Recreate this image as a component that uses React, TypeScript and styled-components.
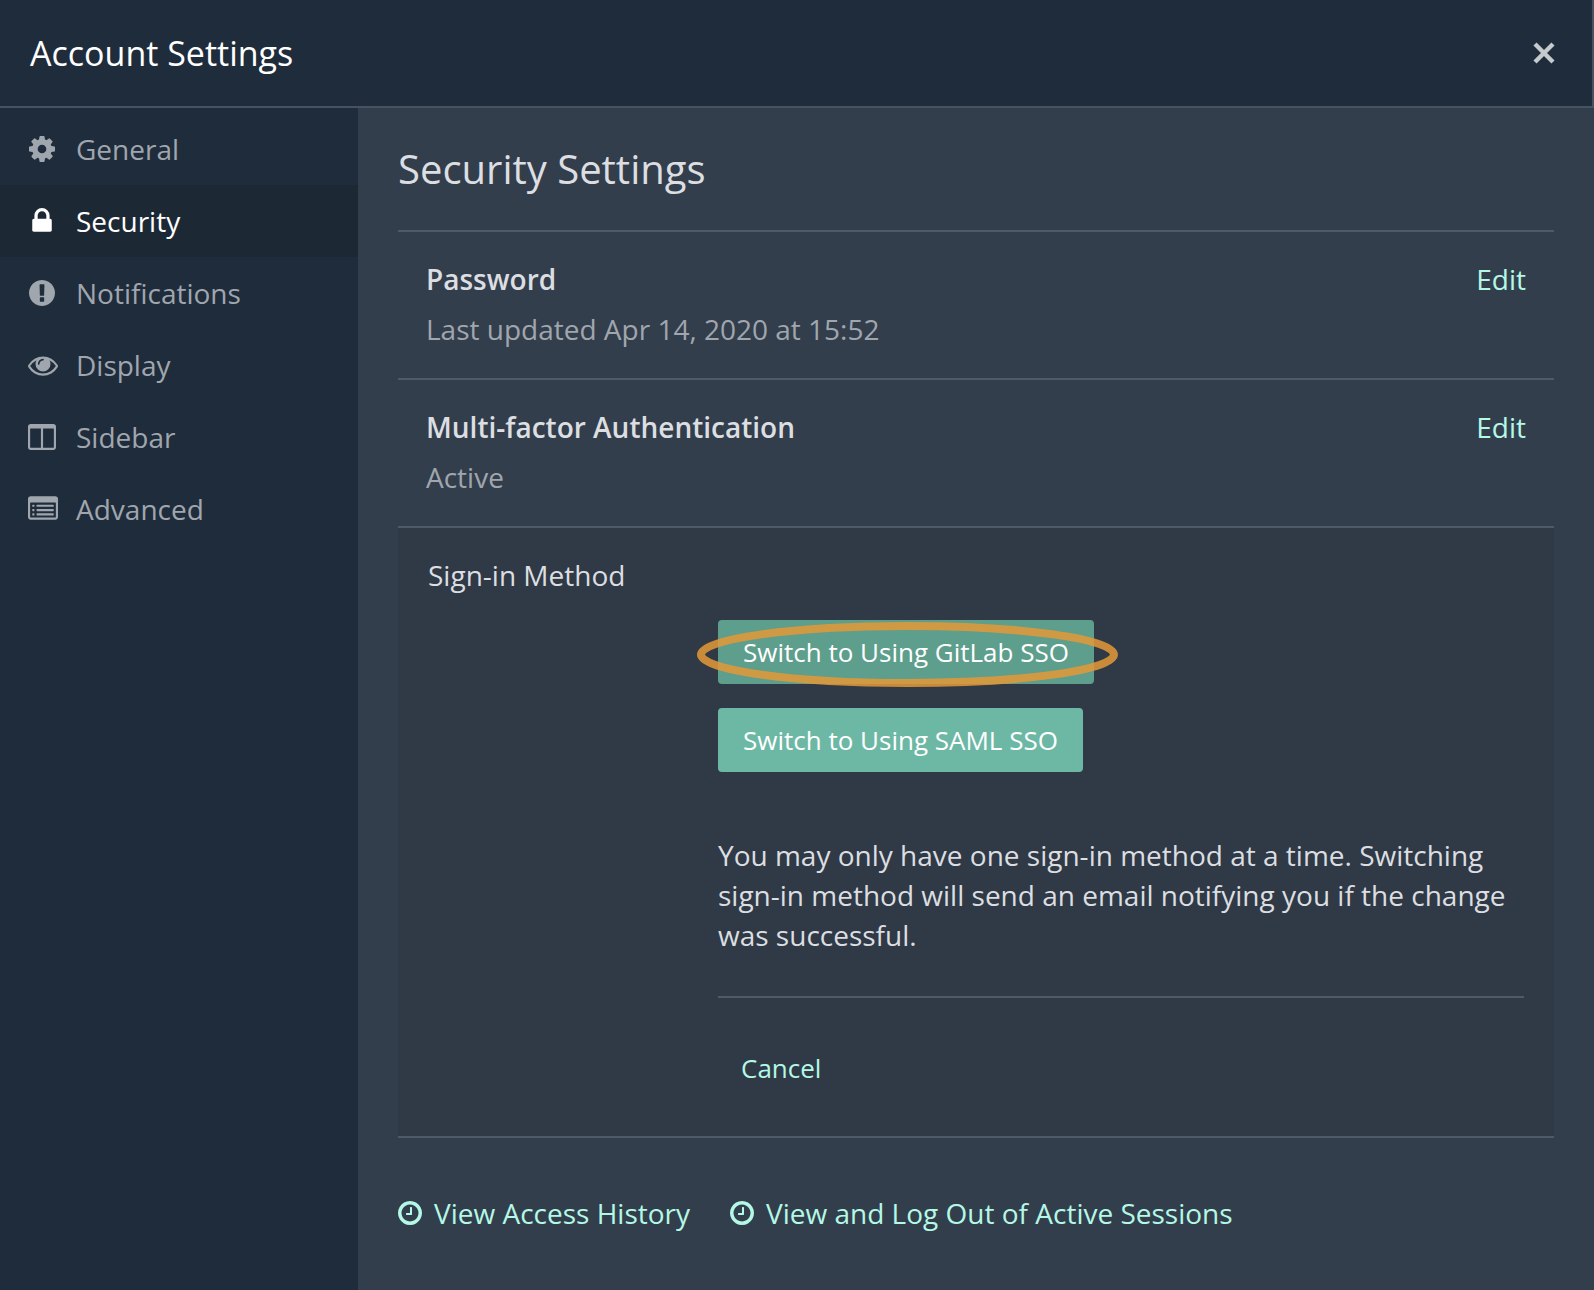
import type { ReactNode } from 'react';
import styled, { createGlobalStyle } from 'styled-components';

const color = {
  chrome: '#1f2c3b',
  chromeActive: '#1c2935',
  main: '#333e4c',
  panel: '#2f3a46',
  line: '#4f5a67',
  headerLine: '#46525f',
  text: '#dcdee1',
  muted: '#a0a6ae',
  link: '#b4f8e6',
  button: '#6cb8a5',
  buttonHover: '#5d9e8c',
};

const GlobalStyle = createGlobalStyle`
  *, *::before, *::after { box-sizing: border-box; }
  body {
    margin: 0;
    background: ${color.main};
    color: ${color.text};
    font-family: 'Open Sans', 'Noto Sans', sans-serif;
    font-size: 28px;
    line-height: 40px;
  }
  h1, h2, h3, p, ul { margin: 0; padding: 0; font-weight: 400; }
  a { text-decoration: none; }
  button { font-family: inherit; border: 0; cursor: pointer; }
`;

const Page = styled.div`
  display: flex;
  flex-direction: column;
  min-height: 100vh;
`;

const Header = styled.header`
  display: flex;
  align-items: center;
  justify-content: space-between;
  padding: 28px 36px 28px 30px;
  background: ${color.chrome};
  border-bottom: 2px solid ${color.headerLine};
  border-right: 2px solid ${color.headerLine};
`;

const Title = styled.h1`
  color: #fff;
  font-size: 34px;
  line-height: 50px;
`;

const CloseButton = styled.button`
  display: flex;
  padding: 0;
  background: none;
  color: #c5cacc;
`;

const Body = styled.div`
  display: flex;
  flex: 1;
`;

const Sidebar = styled.nav`
  flex: 0 0 358px;
  padding-top: 5px;
  background: ${color.chrome};
`;

const NavList = styled.ul`
  list-style: none;
`;

const NavLink = styled.a<{ $active?: boolean }>`
  display: flex;
  align-items: center;
  gap: 20px;
  padding: 16px 28px;
  background: ${(p) => (p.$active ? color.chromeActive : 'transparent')};
  color: ${(p) => (p.$active ? '#fff' : color.muted)};
`;

const IconSlot = styled.span`
  display: flex;
  align-items: center;
  justify-content: safe center;
  flex: 0 0 28px;
  width: 28px;
  height: 30px;

  svg { flex: none; }
`;

const Main = styled.main`
  flex: 1;
  min-width: 0;
  padding: 33px 40px;
`;

const Heading = styled.h2`
  padding-bottom: 33px;
  border-bottom: 2px solid ${color.line};
  font-size: 40px;
  line-height: 56px;
`;

const Setting = styled.section`
  display: flex;
  justify-content: space-between;
  align-items: flex-start;
  padding: 27px 28px 29px;
  border-bottom: 2px solid ${color.line};
`;

const SettingText = styled.div`
  display: flex;
  flex-direction: column;
  gap: 10px;
`;

const SettingName = styled.h3`
  font-size: 28px;
  font-weight: 600;
`;

const SettingValue = styled.p`
  color: ${color.muted};
`;

const TextLink = styled.a`
  display: inline-flex;
  align-items: center;
  gap: 12px;
  color: ${color.link};
`;

const Panel = styled.section`
  padding: 27px 30px 36px;
  background: ${color.panel};
  border-bottom: 2px solid ${color.line};
`;

const PanelName = styled.h3`
  font-size: 28px;
`;

const PanelBody = styled.div`
  padding: 25px 0 0 290px;
`;

const Methods = styled.div`
  display: flex;
  flex-direction: column;
  align-items: flex-start;
  gap: 24px;
  margin-bottom: 63px;
`;

const Method = styled.div`
  position: relative;
`;

const Button = styled.button<{ $pressed?: boolean }>`
  display: block;
  padding: 14px 25px;
  border-radius: 4px;
  background: ${(p) => (p.$pressed ? color.buttonHover : color.button)};
  color: #fff;
  font-size: 26px;
  line-height: 36px;
`;

const Highlight = styled.svg`
  position: absolute;
  top: 2px;
  left: -22px;
  width: calc(100% + 46px);
  height: 66px;
  overflow: visible;
  pointer-events: none;
`;

const Actions = styled.div`
  margin-top: 41px;
  padding-top: 38px;
  border-top: 2px solid ${color.line};
`;

const CancelButton = styled.button`
  padding: 14px 23px;
  background: none;
  color: ${color.link};
  font-size: 26px;
  line-height: 36px;
`;

const FooterLinks = styled.div`
  display: flex;
  flex-wrap: wrap;
  gap: 40px;
  padding-top: 55px;
`;

type GlyphProps = { box: string; width: number; height: number; children: ReactNode };

const Glyph = ({ box, width, height, children }: GlyphProps) => (
  <svg viewBox={box} width={width} height={height} fill="currentColor" aria-hidden="true">
    {children}
  </svg>
);

const CogIcon = () => (
  <Glyph box="128 128 1536 1536" width={26} height={26}>
    <path d="M1152 896q0-106-75-181t-181-75-181 75-75 181 75 181 181 75 181-75 75-181zm512-109v222q0 12-8 23t-20 13l-185 28q-19 54-39 91 35 50 107 138 10 12 10 25t-9 23q-27 37-99 108t-94 71q-12 0-26-9l-138-108q-44 23-91 38-16 136-29 186-7 28-36 28h-222q-14 0-24.5-8.5t-11.5-21.5l-28-184q-49-16-90-37l-141 107q-10 9-25 9-14 0-25-11-126-114-165-168-7-10-7-23 0-12 8-23 15-21 51-66.5t54-70.5q-27-50-41-99l-183-27q-13-2-21-12.5t-8-23.5v-222q0-12 8-23t19-13l186-28q14-46 39-92-40-57-107-138-10-12-10-24 0-10 9-23 26-36 98.5-107.5t94.5-71.5q13 0 26 10l138 107q44-23 91-38 16-136 29-186 7-28 36-28h222q14 0 24.5 8.5t11.5 21.5l28 184q49 16 90 37l142-107q9-9 24-9 13 0 25 10 129 119 165 170 7 8 7 22 0 12-8 23-15 21-51 66.5t-54 70.5q26 50 41 98l183 28q13 2 21 12.5t8 23.5z" />
  </Glyph>
);

const LockIcon = () => (
  <Glyph box="320 128 1152 1536" width={20} height={26}>
    <path d="M640 768h512v-192q0-106-75-181t-181-75-181 75-75 181v192zm832 96v576q0 40-28 68t-68 28h-960q-40 0-68-28t-28-68v-576q0-40 28-68t68-28h32v-192q0-184 132-316t316-132 316 132 132 316v192h32q40 0 68 28t28 68z" />
  </Glyph>
);

const AlertIcon = () => (
  <Glyph box="128 128 1536 1536" width={26} height={26}>
    <path d="M896 128q209 0 385.5 103t279.5 279.5 103 385.5-103 385.5-279.5 279.5-385.5 103-385.5-103-279.5-279.5-103-385.5 103-385.5 279.5-279.5 385.5-103zm128 1247v-190q0-14-9-23.5t-22-9.5h-192q-13 0-23 10t-10 23v190q0 13 10 23t23 10h192q13 0 22-9.5t9-23.5zm-2-344l18-621q0-12-10-18-10-8-24-8h-220q-14 0-24 8-10 6-10 18l17 621q0 10 10 17.5t24 7.5h185q14 0 23.5-7.5t10.5-17.5z" />
  </Glyph>
);

const EyeIcon = () => (
  <Glyph box="0 0 1792 1792" width={30} height={30}>
    <path d="M1664 960q-152-236-381-353 61 104 61 225 0 185-131.5 316.5t-316.5 131.5-316.5-131.5-131.5-316.5q0-121 61-225-229 117-381 353 133 205 333.5 326.5t434.5 121.5 434.5-121.5 333.5-326.5zm-720-384q0-20-14-34t-34-14q-125 0-214.5 89.5t-89.5 214.5q0 20 14 34t34 14 34-14 14-34q0-86 61-147t147-61q20 0 34-14t14-34zm848 384q0 34-20 69-140 230-376.5 368.5t-499.5 138.5-499.5-139-376.5-368q-20-35-20-69t20-69q140-229 376.5-368t499.5-139 499.5 139 376.5 368q20 35 20 69z" />
  </Glyph>
);

const ColumnsIcon = () => (
  <Glyph box="64 128 1664 1536" width={28} height={26}>
    <path d="M224 1536h608v-1152h-640v1120q0 13 9.5 22.5t22.5 9.5zm1376-32v-1120h-640v1152h608q13 0 22.5-9.5t9.5-22.5zm128-1216v1216q0 66-47 113t-113 47h-1344q-66 0-113-47t-47-113v-1216q0-66 47-113t113-47h1344q66 0 113 47t47 113z" />
  </Glyph>
);

const ListIcon = () => (
  <Glyph box="0 128 1792 1536" width={30} height={26}>
    <path
      fillRule="evenodd"
      d="M160 128h1472q66 0 113 47t47 113v1088q0 66-47 113t-113 47h-1472q-66 0-113-47t-47-113v-1088q0-66 47-113t113-47zM160 512q-32 0-32 32v832q0 32 32 32h1472q32 0 32-32v-832q0-32-32-32z"
    />
    {[640, 896, 1152].map((y) => (
      <g key={y}>
        <rect x="256" y={y} width="128" height="128" rx="32" />
        <rect x="512" y={y} width="1024" height="128" rx="32" />
      </g>
    ))}
  </Glyph>
);

const ClockIcon = () => (
  <Glyph box="128 128 1536 1536" width={24} height={24}>
    <path d="M1024 544v448q0 14-9 23t-23 9h-320q-14 0-23-9t-9-23v-64q0-14 9-23t23-9h224v-352q0-14 9-23t23-9h64q14 0 23 9t9 23zm416 352q0-148-73-273t-198-198-273-73-273 73-198 198-73 273 73 273 198 198 273 73 273-73 198-198 73-273zm224 0q0 209-103 385.5t-279.5 279.5-385.5 103-385.5-103-279.5-279.5-103-385.5 103-385.5 279.5-279.5 385.5-103 385.5 103 279.5 279.5 103 385.5z" />
  </Glyph>
);

const CloseIcon = () => (
  <Glyph box="0 0 24 24" width={24} height={24}>
    <path d="M3 3L21 21M21 3L3 21" stroke="currentColor" strokeWidth="4.4" />
  </Glyph>
);

const navItems = [
  { label: 'General', icon: <CogIcon /> },
  { label: 'Security', icon: <LockIcon />, active: true },
  { label: 'Notifications', icon: <AlertIcon /> },
  { label: 'Display', icon: <EyeIcon /> },
  { label: 'Sidebar', icon: <ColumnsIcon /> },
  { label: 'Advanced', icon: <ListIcon /> },
];

const settings = [
  { name: 'Password', value: 'Last updated Apr 14, 2020 at 15:52' },
  { name: 'Multi-factor Authentication', value: 'Active' },
];

export default function App() {
  return (
    <Page>
      <GlobalStyle />
      <Header>
        <Title>Account Settings</Title>
        <CloseButton type="button" aria-label="Close">
          <CloseIcon />
        </CloseButton>
      </Header>
      <Body>
        <Sidebar aria-label="Account settings">
          <NavList>
            {navItems.map((item) => (
              <li key={item.label}>
                <NavLink href="#" $active={item.active} aria-current={item.active ? 'page' : undefined}>
                  <IconSlot>{item.icon}</IconSlot>
                  {item.label}
                </NavLink>
              </li>
            ))}
          </NavList>
        </Sidebar>
        <Main>
          <Heading>Security Settings</Heading>
          {settings.map((s) => (
            <Setting key={s.name}>
              <SettingText>
                <SettingName>{s.name}</SettingName>
                <SettingValue>{s.value}</SettingValue>
              </SettingText>
              <TextLink href="#" aria-label={`Edit ${s.name}`}>Edit</TextLink>
            </Setting>
          ))}
          <Panel>
            <PanelName>Sign-in Method</PanelName>
            <PanelBody>
              <Methods>
                <Method>
                  <Button type="button" $pressed>Switch to Using GitLab SSO</Button>
                  <Highlight viewBox="0 0 422 66" preserveAspectRatio="none" aria-hidden="true">
                    <ellipse
                      cx="211.5"
                      cy="32.5"
                      rx="206.5"
                      ry="28.5"
                      fill="none"
                      stroke="#e39838"
                      strokeOpacity="0.86"
                      strokeWidth="8"
                    />
                  </Highlight>
                </Method>
                <Button type="button">Switch to Using SAML SSO</Button>
              </Methods>
              <p>
                You may only have one sign-in method at a time. Switching sign-in method will send an
                email notifying you if the change was successful.
              </p>
              <Actions>
                <CancelButton type="button">Cancel</CancelButton>
              </Actions>
            </PanelBody>
          </Panel>
          <FooterLinks>
            <TextLink href="#">
              <ClockIcon />
              View Access History
            </TextLink>
            <TextLink href="#">
              <ClockIcon />
              View and Log Out of Active Sessions
            </TextLink>
          </FooterLinks>
        </Main>
      </Body>
    </Page>
  );
}
